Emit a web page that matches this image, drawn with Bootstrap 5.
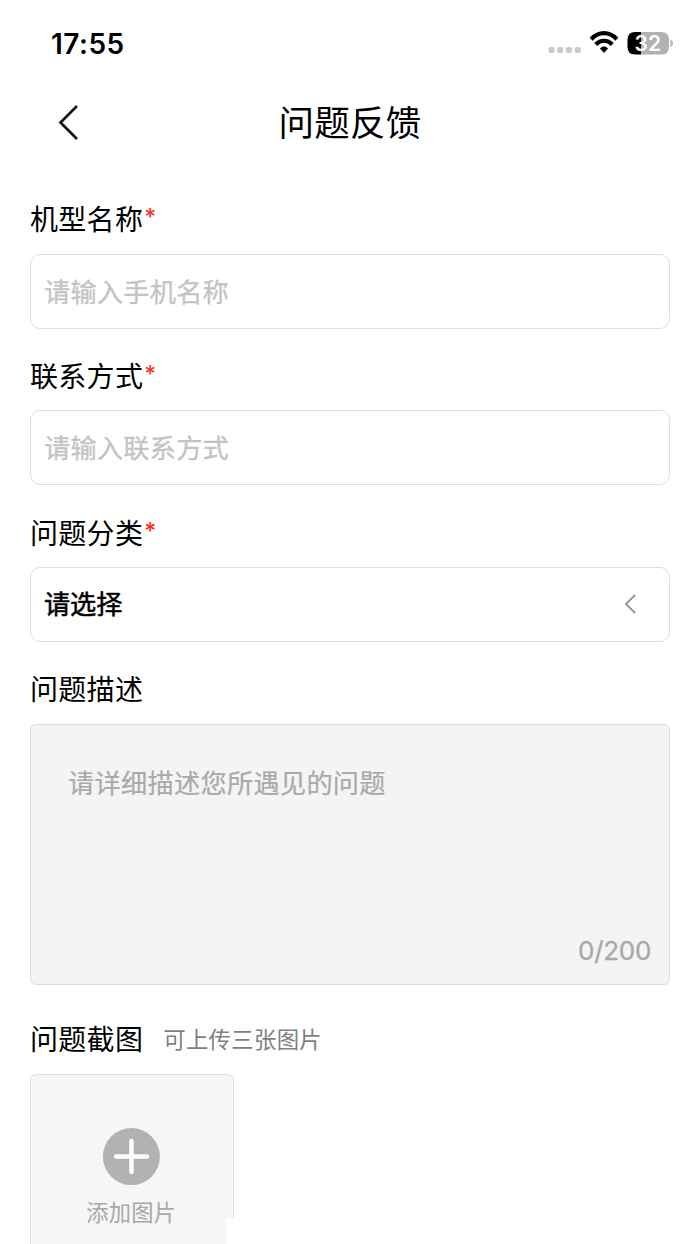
<!DOCTYPE html>
<html lang="zh-CN">
<head>
<meta charset="utf-8">
<meta name="viewport" content="width=device-width, initial-scale=1">
<title>问题反馈</title>
<link rel="stylesheet" href="https://cdn.jsdelivr.net/npm/bootstrap@5.3.0/dist/css/bootstrap.min.css">
<style>
body{font-family:Inter,"Noto Sans CJK SC",sans-serif;background:#fff;color:#000}
.phone{width:700px;height:1244px}
.cjk{font-family:"Noto Sans CJK SC",sans-serif}
.status{height:86px;padding-left:51px;padding-right:26px}
.clock{font-size:28px;font-weight:600;line-height:30px;letter-spacing:.5px;padding-top:2px}
.topbar{height:72px}
.back{left:58px;top:18px}
.topbar h1{font-size:35.5px;font-weight:400;line-height:70px;letter-spacing:.3px}
.page-form{padding:45.5px 30px 0}
.field{margin-bottom:32.3px}
.caption-row{height:28px;margin-bottom:22.1px}
.field + .field .caption-row{margin-bottom:21.4px}
.caption{font-size:28px;line-height:28px;letter-spacing:.3px}
.req{font-size:23px;line-height:26px;color:#f5392f;margin-left:1px;font-weight:500}
.req.strong-red{color:#ff2a12}
.input-box{height:75px;border:1px solid #dedede;border-radius:10px;padding:0 13px 1px;font-size:26.2px;letter-spacing:.25px;background:#fff;color:#000}
.input-box::placeholder{color:#c3c3c5;opacity:1;-webkit-text-stroke:.3px #c3c3c5}
.chosen{-webkit-text-stroke:.55px #000;letter-spacing:-.1px}
.desc{height:261px;border:1px solid #dcdcdc;border-radius:6px;background:#f4f4f4;padding:37px;font-size:26.2px;line-height:40px;letter-spacing:.3px;resize:none}
.desc::placeholder{color:#a9a9a9;opacity:1;-webkit-text-stroke:.2px #a9a9a9}
.count{right:19px;bottom:18px;font-size:26px;line-height:32px;color:#a8a8a8;letter-spacing:-.3px;-webkit-text-stroke:.3px #a8a8a8}
.hint{font-size:22.4px;line-height:28px;letter-spacing:.3px;color:#7f7f7f;margin-left:20px}
.upload{width:203.5px;height:170px;border:1px solid #e2e2e2;border-bottom:0;border-radius:6px 6px 0 0;background:#f6f6f6;padding:52.5px 1px 0 0}
.upload span{font-size:22.3px;line-height:30px;letter-spacing:.2px;color:#a8a8a8;margin-top:10px}
.notch{width:8px;height:26px;right:-1px;bottom:0;background:#fff}
</style>
</head>
<body>
<main class="phone overflow-hidden">
  <div class="status d-flex align-items-center justify-content-between">
    <span class="clock">17:55</span>
    <svg width="126" height="30" viewBox="0 0 126 30">
      <g fill="#c9c9c9"><rect x="0.5" y="19" width="6" height="6" rx="2"/><rect x="9.2" y="19" width="6" height="6" rx="2"/><rect x="18" y="19" width="6" height="6" rx="2"/><rect x="26.8" y="19" width="6" height="6" rx="2"/></g>
      <g fill="none" stroke="#000" stroke-width="4.200"><path d="M43.200 11.200C50.800 3.200 61.200 3.200 68.800 11.200"/><path d="M47.700 16.500C52.500 11.500 59.500 11.500 64.300 16.500"/></g>
      <path d="M52.200 20.500Q56 16.800 59.800 20.500L56 24.600Z" fill="#000" stroke="#000" stroke-width=".6" stroke-linejoin="round"/>
      <path d="M87 4H93V26.500H87Q79.500 26.500 79.500 19V11.500Q79.500 4 87 4Z" fill="#000"/>
      <path d="M93 4H113.500Q121 4 121 11.500V19Q121 26.500 113.500 26.500H93Z" fill="#b2b2b2"/>
      <path d="M122.500 11.500Q125 12.500 125 15.200T122.500 19Z" fill="#b2b2b2"/>
      <text x="99.800" y="22.800" text-anchor="middle" font-family="Inter" font-size="21" font-weight="600" fill="#fff">32</text>
    </svg>
  </div>
  <header class="topbar position-relative text-center">
    <svg class="back position-absolute" width="24" height="40" viewBox="0 0 24 40"><path d="M19 2L2.500 18.500L19 35" fill="none" stroke="#111" stroke-width="2.700"/></svg>
    <h1 class="cjk m-0">问题反馈</h1>
  </header>
  <form class="page-form">
    <div class="field">
      <label for="model" class="caption-row d-flex"><span class="caption cjk">机型名称</span><span class="req">*</span></label>
      <input id="model" class="form-control input-box cjk" placeholder="请输入手机名称">
    </div>
    <div class="field">
      <label for="contact" class="caption-row d-flex"><span class="caption cjk">联系方式</span><span class="req">*</span></label>
      <input id="contact" class="form-control input-box cjk" placeholder="请输入联系方式">
    </div>
    <div class="field">
      <div class="caption-row d-flex"><span class="caption cjk">问题分类</span><span class="req strong-red">*</span></div>
      <div class="input-box cjk d-flex align-items-center justify-content-between">
        <span class="chosen">请选择</span>
        <svg class="me-3" width="18" height="22" viewBox="0 0 18 22"><path d="M13 2L4 11L13 20" fill="none" stroke="#999" stroke-width="2"/></svg>
      </div>
    </div>
    <div class="field mb-0">
      <label for="desc" class="caption-row d-flex"><span class="caption cjk">问题描述</span></label>
      <div class="position-relative">
        <textarea id="desc" class="form-control desc cjk d-block" placeholder="请详细描述您所遇见的问题"></textarea>
        <span class="count position-absolute">0/200</span>
      </div>
    </div>
    <div style="margin-top:39.3px">
      <div class="caption-row d-flex"><span class="caption cjk">问题截图</span><span class="hint cjk">可上传三张图片</span></div>
      <div class="upload position-relative d-flex flex-column align-items-center">
        <svg class="flex-shrink-0" width="58" height="58" viewBox="0 0 58 58"><circle cx="29.400" cy="28.600" r="28.500" fill="#b2b2b2"/><path d="M14 28.600H45M29.500 13V44" stroke="#fff" stroke-width="4.500" stroke-linecap="round"/></svg>
        <span class="cjk">添加图片</span>
        <div class="notch position-absolute"></div>
      </div>
    </div>
  </form>
</main>
<script src="https://cdn.jsdelivr.net/npm/bootstrap@5.3.0/dist/js/bootstrap.bundle.min.js"></script>
</body>
</html>
